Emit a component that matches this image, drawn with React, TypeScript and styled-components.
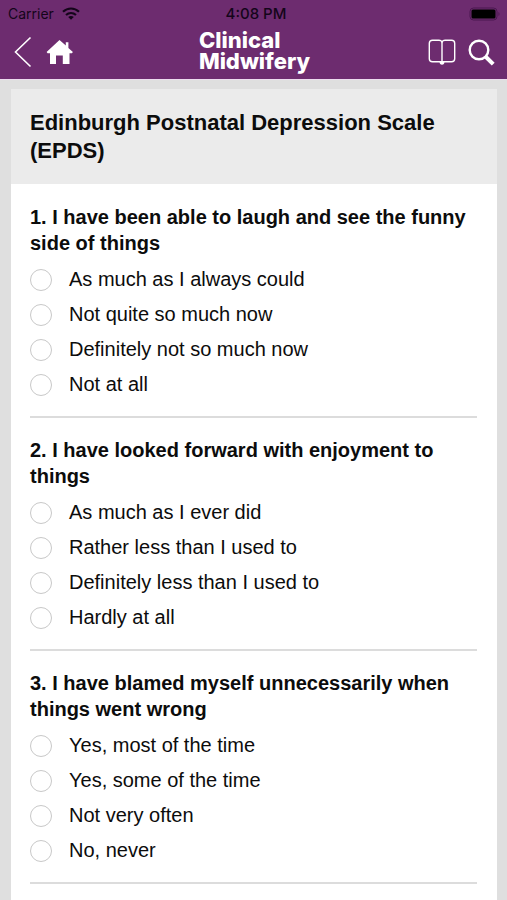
import React from "react";
import styled, { createGlobalStyle } from "styled-components";

const GlobalStyle = createGlobalStyle`
  *, *::before, *::after { box-sizing: border-box; }
  body {
    margin: 0;
    background: #dfdfdf;
    color: #0c0c0c;
    font-family: "Liberation Sans", Arial, sans-serif;
  }
`;

const Header = styled.header`
  background: #6d2c6f;
  border-bottom: 1px solid #ecdcee;
`;

const StatusBar = styled.div`
  display: grid;
  grid-template-columns: 1fr auto 1fr;
  align-items: center;
  height: 27px;
  padding: 0 7px 0 8px;
  color: #14051a;
  font-family: Inter, sans-serif;
  font-size: 14px;
  line-height: 16px;
`;

const Carrier = styled.div`
  display: flex;
  align-items: center;
  gap: 8px;
`;

const Time = styled.time`
  padding-left: 4px;
  font-size: 15px;
  font-weight: 500;
`;

const Battery = styled.div`
  display: flex;
  justify-content: flex-end;
`;

const NavBar = styled.nav`
  display: grid;
  grid-template-columns: 1fr auto 1fr;
  align-items: center;
  height: 52px;
  padding: 0 12px 2px 14px;
`;

const NavGroup = styled.div<{ $end?: boolean }>`
  display: flex;
  align-items: center;
  justify-content: ${(p) => (p.$end ? "flex-end" : "flex-start")};
  gap: ${(p) => (p.$end ? "12px" : "14px")};
`;

const IconButton = styled.button`
  display: flex;
  padding: 0;
  border: 0;
  background: none;
  color: #fff;
  cursor: pointer;
`;

const Brand = styled.div`
  padding-bottom: 2px;
  color: #fff;
  font-family: Inter, sans-serif;
  font-size: 22px;
  font-weight: 800;
  line-height: 21px;
`;

const BrandLine = styled.span`
  display: block;
`;

const Card = styled.main`
  margin: 9px 10px 0 11px;
  background: #fff;
`;

const CardTitle = styled.h1`
  margin: 0;
  padding: 20px 20px 19px 19px;
  background: #ebebeb;
  font-size: 22px;
  line-height: 28px;
`;

const Questions = styled.form`
  display: flex;
  flex-direction: column;
  gap: 19px;
  padding: 20px 20px 20px 19px;
`;

const Question = styled.fieldset`
  min-width: 0;
  margin: 0;
  padding: 0 0 14px;
  border: 0;
  border-bottom: 2px solid #dcdcdc;
`;

const Prompt = styled.legend`
  margin-bottom: 6px;
  padding: 0;
  font-size: 20px;
  font-weight: 700;
  line-height: 26px;
`;

const Option = styled.label`
  display: flex;
  align-items: center;
  gap: 17px;
  font-size: 20px;
  line-height: 35px;
  cursor: pointer;
`;

const Radio = styled.input`
  appearance: none;
  flex: none;
  width: 22px;
  height: 22px;
  margin: 0;
  border: 1px solid #c8c8c8;
  border-radius: 50%;
  background: #fff;

  &:checked {
    border: 6px solid #6d2c6f;
  }
`;

const questions = [
  {
    prompt: "1. I have been able to laugh and see the funny side of things",
    options: ["As much as I always could", "Not quite so much now", "Definitely not so much now", "Not at all"],
  },
  {
    prompt: "2. I have looked forward with enjoyment to things",
    options: ["As much as I ever did", "Rather less than I used to", "Definitely less than I used to", "Hardly at all"],
  },
  {
    prompt: "3. I have blamed myself unnecessarily when things went wrong",
    options: ["Yes, most of the time", "Yes, some of the time", "Not very often", "No, never"],
  },
];

const WifiIcon = () => (
  <svg width="18" height="13" viewBox="0 0 18 13" fill="none" stroke="currentColor" strokeWidth="2.2" aria-hidden="true">
    <path d="M1 4.7C5.6.4 12.4.4 17 4.7" />
    <path d="M4 8c2.9-2.6 7.1-2.6 10 0" />
    <path d="M9 12.8 6.2 10c1.6-1.4 4-1.4 5.6 0z" fill="currentColor" stroke="none" />
  </svg>
);

const BatteryIcon = () => (
  <svg width="31" height="14" viewBox="0 0 31 14" aria-hidden="true">
    <rect x="1" y="1" width="27" height="12" rx="3.5" fill="none" stroke="#4a1750" />
    <rect x="2.5" y="2.5" width="24" height="9" rx="1.5" fill="#000" />
    <path d="M29.5 5v4c1.3-.7 1.3-3.3 0-4z" fill="#4a1750" />
  </svg>
);

const BackIcon = () => (
  <svg width="18" height="32" viewBox="0 0 18 32" fill="none" stroke="currentColor" strokeWidth="1.6" aria-hidden="true">
    <path d="M16.5 1.5 1.5 16l15 14.5" />
  </svg>
);

const HomeIcon = () => (
  <svg width="28" height="26" viewBox="0 0 28 26" fill="currentColor" aria-hidden="true">
    <path d="M13.500 1 .6 13l1 1.200H4V25h6v-8.600h6.800V25H23.500V14.200h2.400l1-1.200-4.500-4V3.200h-2.600v3.300z" />
  </svg>
);

const BookIcon = () => (
  <svg width="28" height="27" viewBox="0 0 28 27" fill="none" stroke="currentColor" strokeWidth="1.4" aria-hidden="true">
    <path d="M14 3c-.6-1.2-1.6-1.7-3-1.7H4.500C2.400 1.300 1.300 2.400 1.300 4.300v15.400c0 1.900 1.100 3 3.200 3H23.500c2.100 0 3.200-1.100 3.200-3V4.300c0-1.900-1.100-3-3.200-3H17c-1.400 0-2.400.5-3 1.700z" />
    <path d="M14 3v21" />
    <path d="M11.500 22.700h5c0 1.700-1 3-2.500 3s-2.500-1.300-2.500-3z" fill="currentColor" stroke="none" />
  </svg>
);

const SearchIcon = () => (
  <svg width="27" height="27" viewBox="0 0 27 27" fill="none" stroke="currentColor" aria-hidden="true">
    <circle cx="11" cy="11" r="9.3" strokeWidth="2.4" />
    <path d="m17.5 17.5 7.7 7.7" strokeWidth="4" />
  </svg>
);

export default function App() {
  return (
    <>
      <GlobalStyle />
      <Header>
        <StatusBar>
          <Carrier>
            Carrier
            <WifiIcon />
          </Carrier>
          <Time>4:08 PM</Time>
          <Battery>
            <BatteryIcon />
          </Battery>
        </StatusBar>
        <NavBar>
          <NavGroup>
            <IconButton type="button" aria-label="Back">
              <BackIcon />
            </IconButton>
            <IconButton type="button" aria-label="Home">
              <HomeIcon />
            </IconButton>
          </NavGroup>
          <Brand>
            <BrandLine>Clinical</BrandLine>
            <BrandLine>Midwifery</BrandLine>
          </Brand>
          <NavGroup $end>
            <IconButton type="button" aria-label="Contents">
              <BookIcon />
            </IconButton>
            <IconButton type="button" aria-label="Search">
              <SearchIcon />
            </IconButton>
          </NavGroup>
        </NavBar>
      </Header>
      <Card>
        <CardTitle>Edinburgh Postnatal Depression Scale (EPDS)</CardTitle>
        <Questions>
          {questions.map((question, index) => (
            <Question key={question.prompt}>
              <Prompt>{question.prompt}</Prompt>
              {question.options.map((option) => (
                <Option key={option}>
                  <Radio type="radio" name={`question-${index + 1}`} value={option} />
                  {option}
                </Option>
              ))}
            </Question>
          ))}
        </Questions>
      </Card>
    </>
  );
}
